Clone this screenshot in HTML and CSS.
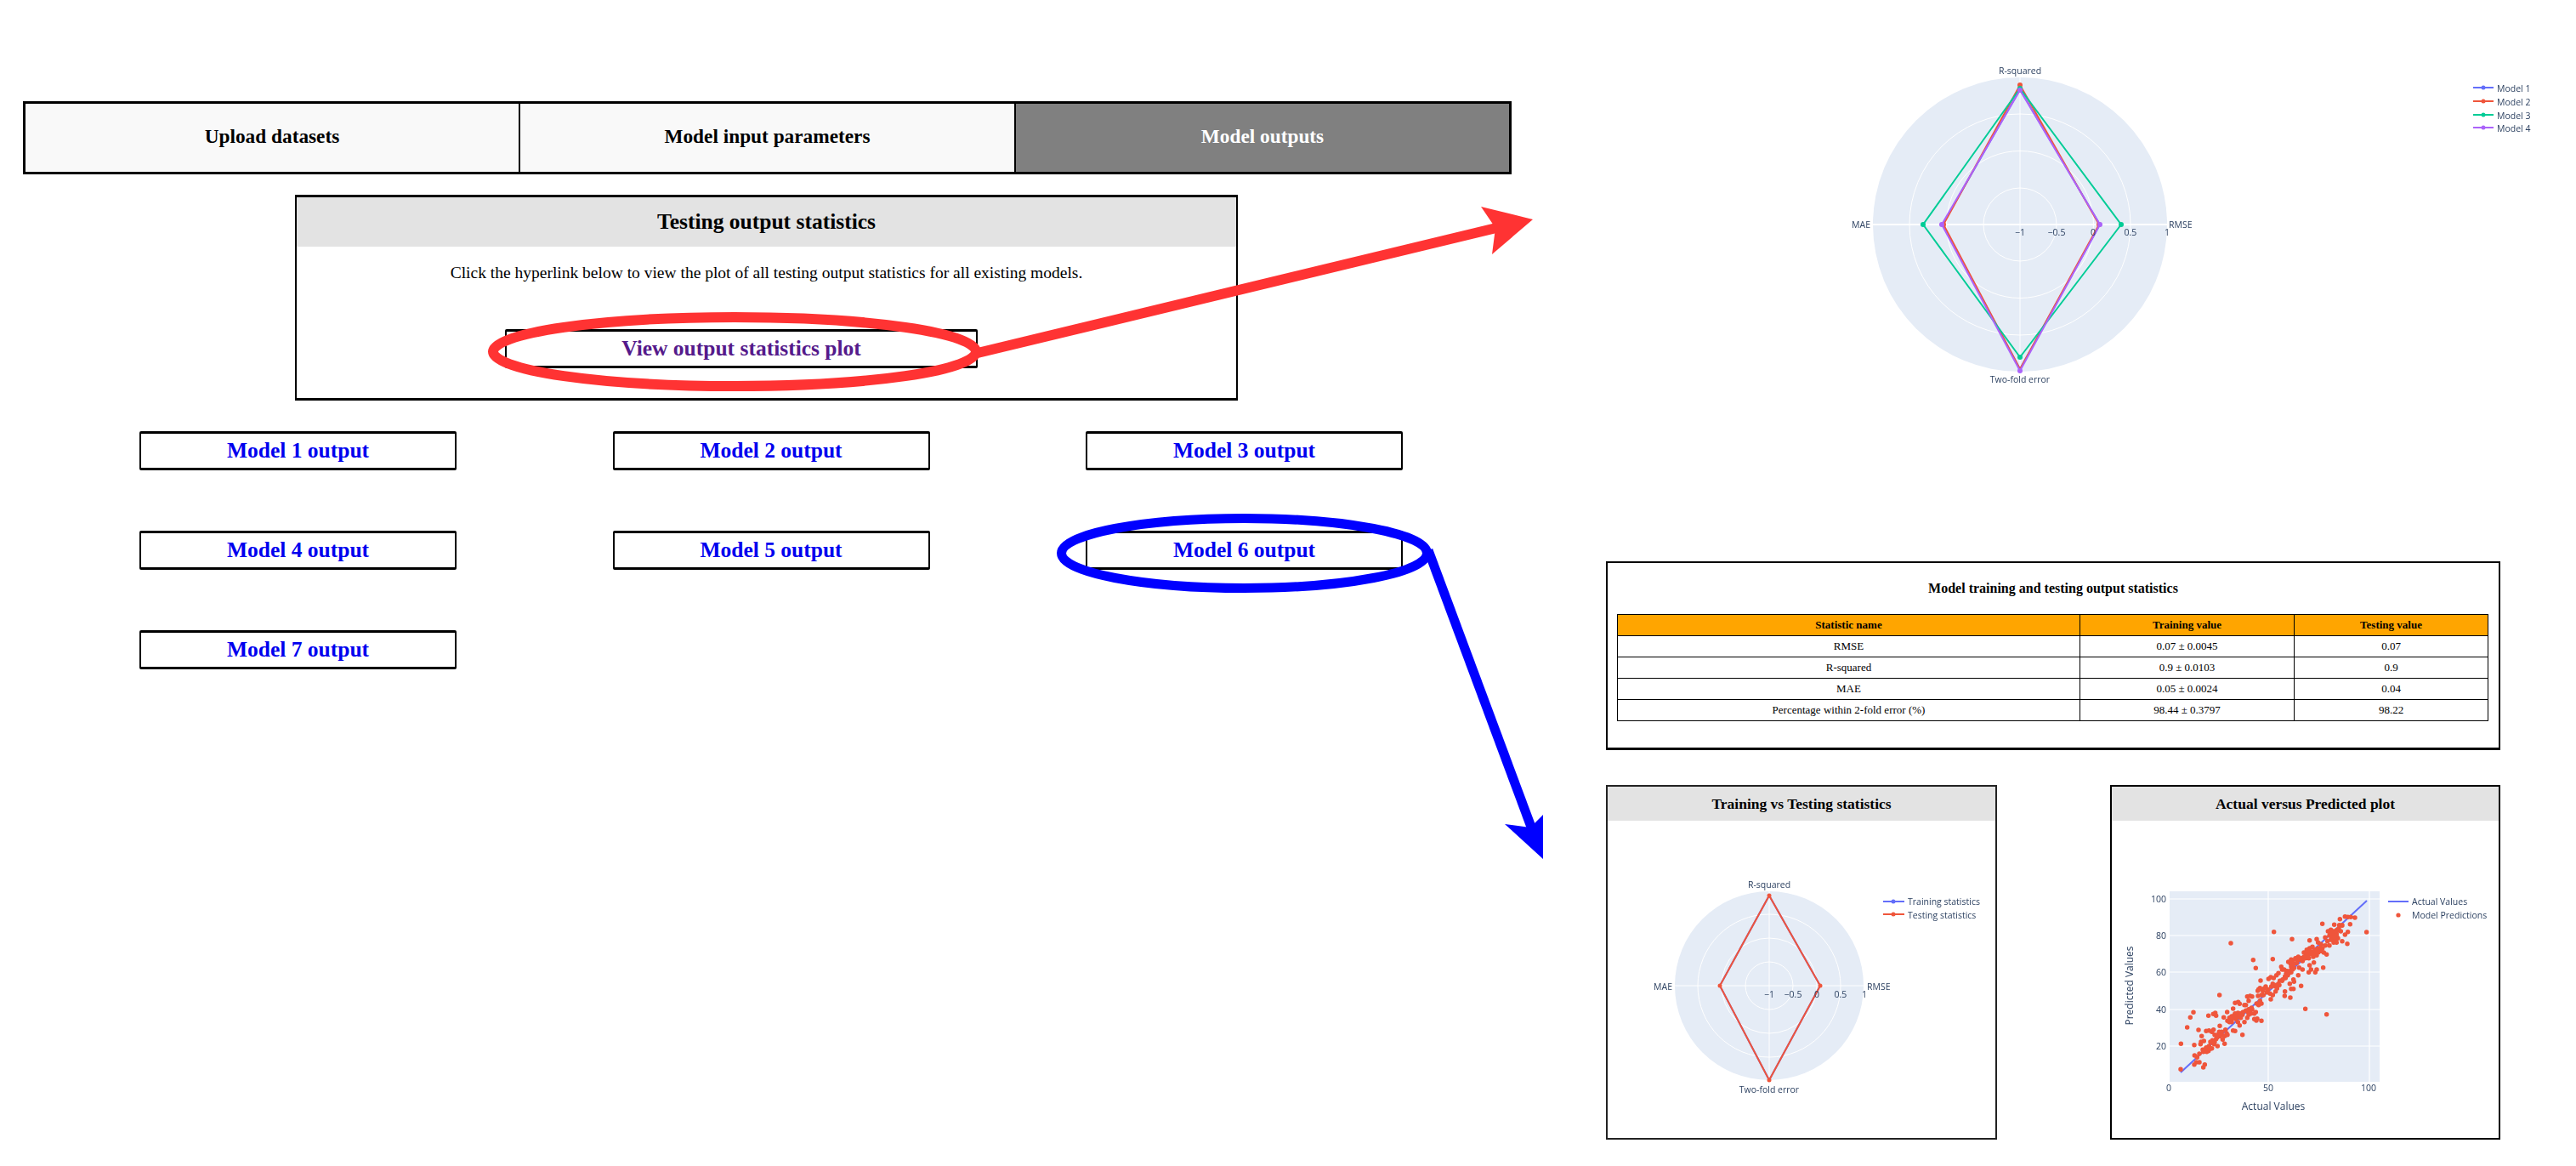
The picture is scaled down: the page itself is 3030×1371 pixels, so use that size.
FILE: index.html
```html
<!DOCTYPE html>
<html lang="en">
<head>
<meta charset="utf-8">
<title>Model outputs</title>
<link rel="stylesheet" href="styles.css">
</head>
<body>
<div class="page">
  <main class="left">
    <nav class="tabs">
      <div class="tab">Upload datasets</div>
      <div class="tab">Model input parameters</div>
      <div class="tab active">Model outputs</div>
    </nav>
    <section class="stats-box">
      <h2 class="stats-head">Testing output statistics</h2>
      <p class="stats-text">Click the hyperlink below to view the plot of all testing output statistics for all existing models.</p>
      <a class="btn btn-visited" href="#plot">View output statistics plot</a>
    </section>
    <div class="model-grid">
      <a class="btn" href="#m1">Model 1 output</a>
      <a class="btn" href="#m2">Model 2 output</a>
      <a class="btn" href="#m3">Model 3 output</a>
      <a class="btn" href="#m4">Model 4 output</a>
      <a class="btn" href="#m5">Model 5 output</a>
      <a class="btn" href="#m6">Model 6 output</a>
      <a class="btn" href="#m7">Model 7 output</a>
    </div>
  </main>

  <aside class="right">
    <svg class="chart-top" viewBox="1889 0 1141 640" width="1141" height="640">
      <circle class="bg" cx="2376" cy="264" r="173"/>
      <g class="grid">
        <circle cx="2376" cy="264" r="43"/><circle cx="2376" cy="264" r="86.5"/><circle cx="2376" cy="264" r="130"/>
        <path d="M2376 91V437"/>
      </g>
      <path class="axis" d="M2203 264H2549"/>
      <g class="series s1"><path d="M2376 105L2470 264L2376 434L2285 264Z"/></g>
      <g class="series s2"><path d="M2376 100L2469 264L2376 434L2286 264Z"/><circle cx="2376" cy="100" r="3"/><circle cx="2469" cy="264" r="3"/><circle cx="2286" cy="264" r="3"/></g>
      <g class="series s3"><path d="M2376 104L2495 264L2376 420L2262 264Z"/><circle cx="2376" cy="104" r="3"/><circle cx="2495" cy="264" r="3"/><circle cx="2376" cy="420" r="3"/><circle cx="2262" cy="264" r="3"/></g>
      <g class="series s4"><path d="M2376 106L2470 264L2376 436L2284 264Z"/><circle cx="2376" cy="106" r="3"/><circle cx="2470" cy="264" r="3"/><circle cx="2376" cy="436" r="3"/><circle cx="2284" cy="264" r="3"/></g>
      <g class="label">
        <text class="mid" x="2376" y="87">R-squared</text>
        <text class="mid" x="2376" y="450">Two-fold error</text>
        <text class="end" x="2200" y="268">MAE</text>
        <text x="2551" y="268">RMSE</text>
        <text class="mid" x="2376" y="277">−1</text>
        <text class="mid" x="2419" y="277">−0.5</text>
        <text class="mid" x="2462" y="277">0</text>
        <text class="mid" x="2506" y="277">0.5</text>
        <text class="mid" x="2549" y="277">1</text>
      </g>
      <g class="series s1"><path d="M2909 103H2933"/><circle cx="2921" cy="103" r="2.5"/></g>
      <g class="series s2"><path d="M2909 119H2933"/><circle cx="2921" cy="119" r="2.5"/></g>
      <g class="series s3"><path d="M2909 135H2933"/><circle cx="2921" cy="135" r="2.5"/></g>
      <g class="series s4"><path d="M2909 150H2933"/><circle cx="2921" cy="150" r="2.5"/></g>
      <g class="label">
        <text x="2937" y="108">Model 1</text><text x="2937" y="124">Model 2</text>
        <text x="2937" y="140">Model 3</text><text x="2937" y="155">Model 4</text>
      </g>
    </svg>

    <section class="table-panel">
      <h3 class="table-title">Model training and testing output statistics</h3>
      <table class="stats-table">
        <colgroup><col class="c1"><col class="c2"><col class="c3"></colgroup>
        <thead>
          <tr><th>Statistic name</th><th>Training value</th><th>Testing value</th></tr>
        </thead>
        <tbody>
          <tr><td>RMSE</td><td>0.07 ± 0.0045</td><td>0.07</td></tr>
          <tr><td>R-squared</td><td>0.9 ± 0.0103</td><td>0.9</td></tr>
          <tr><td>MAE</td><td>0.05 ± 0.0024</td><td>0.04</td></tr>
          <tr><td>Percentage within 2-fold error (%)</td><td>98.44 ± 0.3797</td><td>98.22</td></tr>
        </tbody>
      </table>
    </section>

    <div class="plot-row">
      <section class="plot-panel">
        <h3 class="plot-head">Training vs Testing statistics</h3>
        <svg class="plot-svg" viewBox="1891 965 456 373" width="456" height="373">
          <circle class="bg" cx="2081" cy="1159" r="111"/>
          <g class="grid">
            <circle cx="2081" cy="1159" r="28"/><circle cx="2081" cy="1159" r="56"/><circle cx="2081" cy="1159" r="84"/>
            <path d="M2081 1048V1270M1970 1159H2192"/>
          </g>
          <g class="series s1"><path d="M2081 1053L2141 1159L2081 1270L2023 1159Z"/></g>
          <g class="series s2"><path d="M2081 1053L2141 1159L2081 1270L2023 1159Z"/><circle cx="2081" cy="1053" r="2.5"/><circle cx="2141" cy="1159" r="2.5"/><circle cx="2081" cy="1270" r="2.5"/><circle cx="2023" cy="1159" r="2.5"/></g>
          <g class="label">
            <text class="mid" x="2081" y="1044">R-squared</text>
            <text class="mid" x="2081" y="1285">Two-fold error</text>
            <text class="end" x="1967" y="1164">MAE</text>
            <text x="2196" y="1164">RMSE</text>
            <text class="mid" x="2081" y="1173">−1</text>
            <text class="mid" x="2109" y="1173">−0.5</text>
            <text class="mid" x="2137" y="1173">0</text>
            <text class="mid" x="2165" y="1173">0.5</text>
            <text class="mid" x="2193" y="1173">1</text>
          </g>
          <g class="series s1"><path d="M2215 1060H2240"/><circle cx="2227" cy="1060" r="2.5"/></g>
          <g class="series s2"><path d="M2215 1075H2240"/><circle cx="2227" cy="1075" r="2.5"/></g>
          <g class="label">
            <text x="2244" y="1064">Training statistics</text>
            <text x="2244" y="1080">Testing statistics</text>
          </g>
        </svg>
      </section>

      <section class="plot-panel plot-panel-b">
        <h3 class="plot-head">Actual versus Predicted plot</h3>
        <svg class="plot-svg" viewBox="2484 965 455 373" width="455" height="373">
          <rect class="bg" x="2552" y="1048" width="247" height="224"/>
          <path class="grid-line" d="M2552 1057H2799M2552 1100H2799M2552 1143H2799M2552 1187H2799M2552 1230H2799M2668 1048V1272M2787 1048V1272"/>
          <path class="fit" d="M2565 1261L2784 1059"/>
          <g transform="translate(2545 1045) scale(.3333)">
            <path class="dots" d="M61 547h0M83 489h0M94 454h0M105 436h0M108 551h0M60 637h0M197 375h0M237 192h0M389 152h0M316 251h0M325 280h0M385 248h0M453 178h0M716 153h0M500 424h0M575 443h0M485 343h0M447 384h0M427 378h0M428 362h0M648 194h0M560 124h0M515 182h0M109 588h0M108 620h0M115 612h0M126 612h0M126 582h0M118 595h0M140 630h0M145 620h0M123 498h0M134 520h0M132 540h0M142 537h0M130 548h0M138 568h0M145 572h0M152 575h0M158 572h0M165 565h0M150 560h0M160 555h0M155 568h0M170 563h0M175 545h0M172 535h0M185 530h0M178 548h0M190 555h0M215 547h0M208 532h0M215 520h0M222 510h0M225 515h0M218 497h0M205 505h0M196 505h0M190 515h0M180 515h0M176 497h0M170 505h0M160 500h0M150 502h0M198 484h0M158 448h0M175 442h0M182 438h0M185 448h0M212 454h0M224 435h0M225 466h0M232 470h0M240 460h0M235 455h0M245 423h0M252 403h0M263 400h0M268 406h0M245 500h0M252 502h0M278 515h0M268 482h0M285 470h0M262 470h0M255 460h0M265 450h0M270 440h0M280 435h0M262 438h0M250 445h0M258 452h0M248 455h0M272 455h0M240 470h0M295 455h0M300 445h0M305 430h0M310 420h0M290 410h0M295 380h0M305 378h0M312 380h0M333 378h0M345 375h0M300 425h0M320 440h0M320 460h0M330 458h0M327 465h0M345 466h0M335 410h0M345 405h0M332 360h0M340 350h0M335 355h0M342 324h0M350 360h0M360 345h0M365 365h0M375 370h0M385 375h0M378 390h0M395 362h0M400 340h0M385 335h0M370 318h0M378 312h0M388 315h0M392 340h0M405 335h0M410 325h0M420 320h0M430 315h0M405 298h0M415 275h0M425 285h0M435 290h0M445 290h0M455 285h0M440 300h0M450 275h0M460 265h0M440 258h0M450 250h0M465 245h0M475 240h0M490 255h0M485 245h0M500 245h0M495 225h0M505 215h0M515 210h0M525 205h0M520 225h0M530 230h0M540 235h0M545 225h0M555 220h0M565 225h0M575 232h0M545 190h0M555 195h0M540 178h0M560 210h0M515 220h0M512 245h0M515 270h0M512 295h0M520 285h0M530 260h0M540 285h0M535 295h0M563 278h0M478 278h0M490 285h0M475 305h0M458 320h0M460 328h0M450 353h0M458 353h0M445 335h0M430 312h0M570 172h0M580 150h0M590 155h0M600 150h0M610 160h0M605 175h0M595 170h0M585 165h0M590 180h0M585 200h0M600 190h0M615 175h0M625 150h0M630 130h0M620 128h0M602 127h0M622 107h0M640 98h0M650 100h0M660 100h0M675 102h0M658 125h0M630 185h0M650 152h0M640 162h0M612 145h0M578 185h0M570 200h0M610 190h0M188 525h0M198 520h0M205 515h0M165 540h0M180 540h0M148 565h0M140 575h0M232 455h0M240 450h0M252 440h0M260 445h0M270 448h0M278 445h0M290 430h0M298 435h0M308 440h0M312 425h0M325 435h0M285 410h0M300 395h0M328 405h0M340 395h0M352 375h0M345 355h0M355 352h0M368 355h0M380 345h0M395 345h0M408 340h0M418 325h0M428 310h0M438 305h0M450 295h0M460 280h0M470 262h0M480 250h0M495 240h0M505 230h0M515 232h0M525 222h0M535 215h0M545 210h0M555 208h0M540 222h0M528 240h0M505 240h0M595 160h0M605 155h0M590 145h0M600 165h0M610 150h0M618 140h0M630 128h0M612 170h0M598 180h0M448 265h0M455 258h0M470 250h0M418 285h0M432 300h0M398 305h0M400 352h0"/>
          </g>
          <g class="label">
            <text class="end" x="2548" y="1061">100</text><text class="end" x="2548" y="1104">80</text>
            <text class="end" x="2548" y="1147">60</text><text class="end" x="2548" y="1191">40</text>
            <text class="end" x="2548" y="1234">20</text>
            <text class="mid" x="2551" y="1283">0</text><text class="mid" x="2668" y="1283">50</text><text class="mid" x="2786" y="1283">100</text>
          </g>
          <g class="label label-lg">
            <text class="mid" x="2674" y="1305">Actual Values</text>
            <text class="mid" transform="translate(2509 1159) rotate(-90)">Predicted Values</text>
          </g>
          <path class="series-line" d="M2809 1060H2833"/>
          <circle class="legend-dot" cx="2821" cy="1076" r="2.6"/>
          <g class="label">
            <text x="2837" y="1064">Actual Values</text>
            <text x="2837" y="1080">Model Predictions</text>
          </g>
        </svg>
      </section>
    </div>
  </aside>
</div>

<svg class="callouts" viewBox="0 0 3030 1371" width="3030" height="1371">
  <path class="red-line" d="M1150 415L1760 268"/>
  <polygon class="red-fill" points="1803,258 1742,243 1759,268 1755,299"/>
  <ellipse class="red-line" cx="864" cy="413.5" rx="284" ry="40.5"/>
  <path class="blue-line" d="M1680 647L1802 975"/>
  <polygon class="blue-fill" points="1815,1010 1770,969 1800,973 1815,958"/>
  <ellipse class="blue-line" cx="1463.5" cy="650.5" rx="215" ry="41"/>
</svg>
</body>
</html>
```

FILE: styles.css
```css
* { box-sizing: border-box; }
html, body { margin: 0; padding: 0; background: #fff; }
body { width: 3030px; height: 1371px; overflow: hidden; position: relative; font-family: "Liberation Serif", "Times New Roman", serif; color: #000; }

.page { display: flex; align-items: flex-start; }

/* left column */
.left { width: 1751px; margin-left: 27px; padding-top: 119px; }
.tabs { display: grid; grid-template-columns: 582px 583px 1fr; height: 86px; border: 3px solid #000; }
.tab { display: flex; align-items: center; justify-content: center; background: #f9f9f9; font-size: 23.3px; font-weight: bold; padding-bottom: 4px; border-right: 2px solid #000; }
.tab.active { background: #808080; color: #fff; border-right: 0; }

.stats-box { width: 1109px; height: 242px; margin: 24px 0 0 320px; border: 2px solid #000; border-top-width: 3px; border-bottom-width: 3px; }
.stats-head { margin: 0; height: 58px; display: flex; align-items: center; justify-content: center; background: #e3e3e3; font-size: 25.5px; font-weight: bold; }
.stats-text { margin: 19px 0 0; font-size: 19.5px; line-height: 24px; text-align: center; }

.btn { display: flex; align-items: center; justify-content: center; height: 46px; border: 2px solid #000; border-top-width: 3px; border-bottom-width: 3px; border-radius: 2px; color: #0000ee; font-size: 25.5px; font-weight: bold; text-decoration: none; background: #fff; padding-bottom: 1px; }
.btn-visited { width: 556px; margin: 54px 0 0 245px; color: #551a8b; }

.model-grid { display: grid; grid-template-columns: repeat(3, 373px); column-gap: 183.5px; row-gap: 71px; margin-top: 36px; padding-left: 137px; }

/* right column */
.right { width: 1052px; margin-left: 111px; }
.chart-top { display: block; margin-bottom: 20px; filter: blur(.4px); }

.bg { fill: #e5ecf6; }
.grid { fill: none; stroke: #fff; stroke-width: 1; }
.axis { fill: none; stroke: #fff; stroke-width: 2; }
.grid-line { fill: none; stroke: #fff; stroke-width: 1.2; }
.series path { fill: none; stroke-width: 2; stroke-linejoin: round; }
.s1 path { stroke: #636efa; } .s1 circle { fill: #636efa; }
.s2 path { stroke: #ef553b; } .s2 circle { fill: #ef553b; }
.s3 path { stroke: #00cc96; } .s3 circle { fill: #00cc96; }
.s4 path { stroke: #ab63fa; } .s4 circle { fill: #ab63fa; }
.label text { font-family: "Open Sans", "Liberation Sans", sans-serif; font-size: 10.5px; fill: #2a3f5f; }
.label-lg text { font-size: 12px; }
.label .mid { text-anchor: middle; }
.label .end { text-anchor: end; }
.fit, .series-line { fill: none; stroke: #636efa; stroke-width: 2; }
.dots { fill: none; stroke: #ef553b; stroke-width: 16.5; stroke-linecap: round; }
.legend-dot { fill: #ef553b; }

.table-panel { height: 222px; border: 2px solid #000; border-bottom-width: 3px; padding: 0 11px; }
.table-title { margin: 0; height: 60px; display: flex; align-items: center; justify-content: center; font-size: 16px; font-weight: bold; padding-bottom: 1px; }
.stats-table { width: 1024px; border-collapse: collapse; table-layout: fixed; font-size: 13px; }
.c1 { width: 544px; } .c2 { width: 252px; } .c3 { width: 228px; }
.stats-table th, .stats-table td { height: 25px; padding: 0; border: 1px solid #000; text-align: center; font-weight: normal; }
.stats-table th { background: #ffa500; font-weight: bold; }

.plot-row { display: flex; justify-content: space-between; margin-top: 41px; }
.plot-panel { width: 460px; height: 417px; border: 2px solid #222; }
.plot-panel-b { width: 459px; border-color: #000; }
.plot-head { margin: 0; height: 40px; display: flex; align-items: center; justify-content: center; background: #e3e3e3; font-size: 17.5px; font-weight: bold; }
.plot-svg { display: block; filter: blur(.4px); }

/* annotation layer */
.callouts { position: absolute; left: 0; top: 0; pointer-events: none; }
.red-line { fill: none; stroke: #ff3333; stroke-width: 12; }
.red-fill { fill: #ff3333; }
.blue-line { fill: none; stroke: #0000ff; stroke-width: 11; }
.blue-fill { fill: #0000ff; }
```
